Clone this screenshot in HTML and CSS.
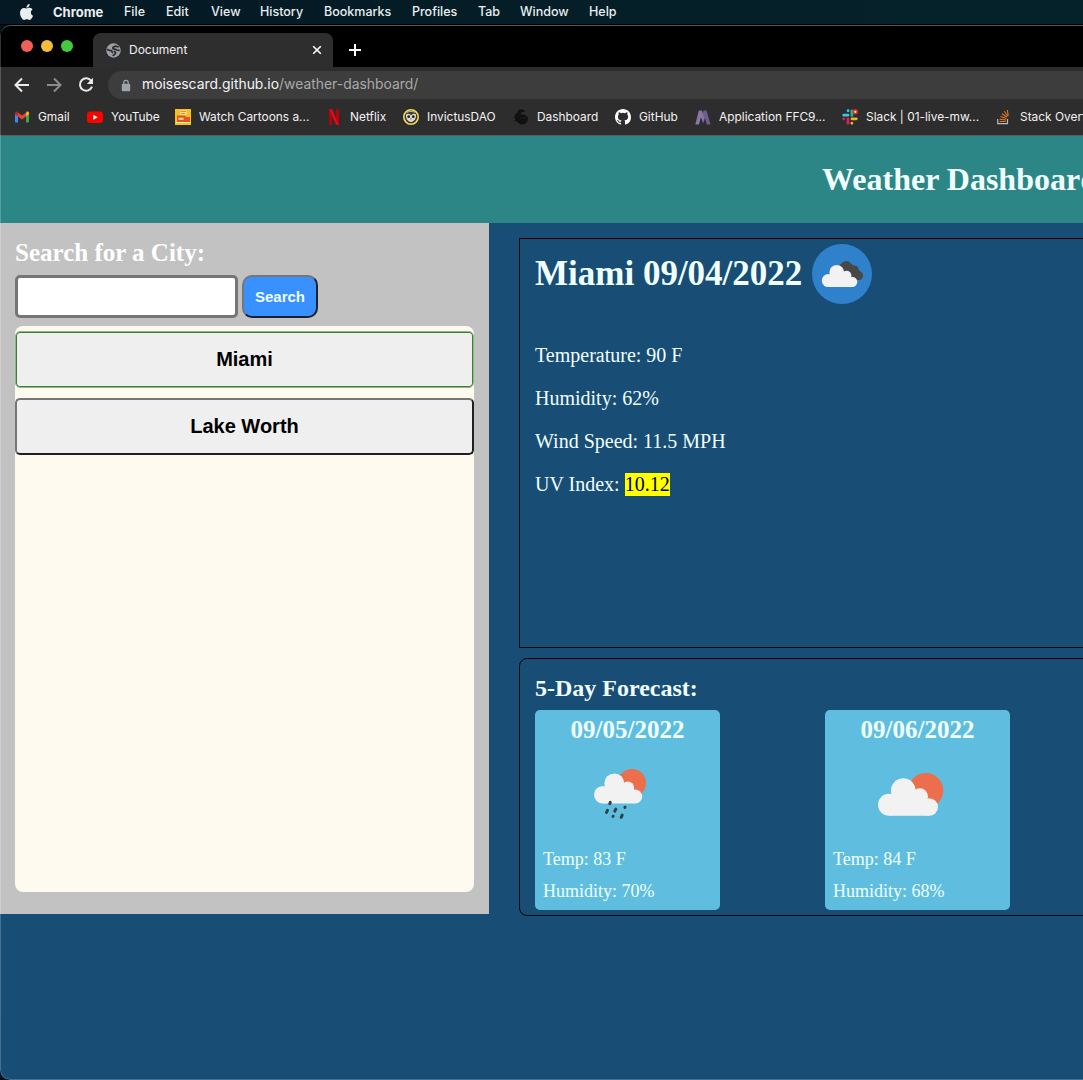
FILE: index.html
```html
<!DOCTYPE html>
<html lang="en">
<head>
<meta charset="utf-8">
<title>Document</title>
<link rel="stylesheet" href="styles.css">
</head>
<body>
<svg width="0" height="0" class="defs"><defs>
  <g id="cloud"><circle cx="11" cy="26.800" r="11"/><circle cx="25.300" cy="12.700" r="12.400"/><circle cx="42" cy="18.300" r="8"/><circle cx="51.200" cy="29" r="8.800"/><path d="M11 37.800V20l14-8 17 6 9.200 10v9.800z"/></g>
</defs></svg>
<nav class="menubar">
  <svg class="apple" viewBox="0 0 814 1000"><path d="M788 341c-6 4-108 62-108 191 0 149 130 201 134 203-1 3-21 72-69 142-43 61-87 123-155 123s-86-40-164-40c-77 0-104 41-166 41s-106-57-156-127C46 791 0 663 0 541c0-194 126-297 251-297 66 0 121 43 163 43 39 0 101-46 176-46 29 0 131 3 198 100zM554 160c31-37 53-88 53-139 0-7-1-14-2-20-50 2-110 34-147 76-28 32-55 83-55 135 0 8 1 16 2 18 3 1 8 1 13 1 45 0 103-30 136-71z"/></svg>
  <span class="app">Chrome</span><span>File</span><span>Edit</span><span>View</span><span>History</span><span>Bookmarks</span><span>Profiles</span><span>Tab</span><span>Window</span><span>Help</span>
</nav>
<div class="window">
  <div class="tabstrip">
    <div class="lights"><i class="red"></i><i class="amber"></i><i class="green"></i></div>
    <div class="tab">
      <svg class="globe" viewBox="0 0 16 16"><circle cx="8" cy="8" r="7.700" fill="#9aa0a6"/><path d="M1.200 6.500C2.500 8.200 4 7.700 5.500 8.200c1.200.5.6 1.900 2 2.400M7.500 14c.2-1.500 2.200-1.500 2.600-3.100.4-1.400-.6-1.700-1.900-1.900M13.500 4c-1.500.3-2.300-.8-4-.5-1.400.3-2.700 1.300-2.100 2.400.5 1 2.200.4 3.300 1 1 .6 1.800 1.300 3.800.7" fill="none" stroke="#2e2e2e" stroke-width="1.900"/></svg>
      <span class="tab-title">Document</span>
      <svg class="close" viewBox="0 0 10 10"><path d="M1.200 1.200l7.600 7.600M8.800 1.200L1.200 8.800"/></svg>
    </div>
    <svg class="plus" viewBox="0 0 12 12"><path d="M6 0v12M0 6h12"/></svg>
  </div>
  <div class="toolbar">
    <svg class="nav-icon" viewBox="0 0 16 16"><path d="M15 8H2M8 1.500L1.500 8 8 14.500"/></svg>
    <svg class="nav-icon dim" viewBox="0 0 16 16"><path d="M1 8h13M8 1.500L14.500 8 8 14.500"/></svg>
    <svg class="nav-icon" viewBox="0 0 16 16"><path d="M13.300 4A6.200 6.200 0 1 0 14 9.700"/><path d="M15 .8v6.200H8.800z" fill="#e8eaed" stroke="none"/></svg>
    <div class="address">
      <svg class="lock" viewBox="0 0 10 12"><rect x=".8" y="4.200" width="8.400" height="7.500" rx="1" fill="#a0a4a9"/><path d="M2.800 5V3a2.200 2.200 0 0 1 4.400 0v2" fill="none" stroke="#a0a4a9" stroke-width="1.200"/></svg>
      <span class="url">moisescard.github.io<em>/weather-dashboard/</em></span>
    </div>
  </div>
  <div class="bookmarks">
    <a><svg viewBox="0 0 16 16"><path d="M1 4.500v8.200c0 .5.4.8.800.8H4V7z" fill="#4285f4"/><path d="M15 4.500v8.200c0 .5-.4.800-.8.800H12V7z" fill="#34a853"/><path d="M12 4.200V7.500l3-2.200V4c0-1.500-1.600-2-2.500-1.300z" fill="#fbbc04"/><path d="M4 4v3.500L1 5.300V4c0-1.500 1.600-2 2.500-1.300z" fill="#c5221f"/><path d="M3.800 3.400L8 6.600l4.200-3.200V7.300L8 10.500 3.800 7.300z" fill="#ea4335"/></svg>Gmail</a>
    <a><svg viewBox="0 0 16 16"><rect y="2.500" width="16" height="11.500" rx="3" fill="#f00"/><path d="M6.300 5.700v5L10.700 8.200z" fill="#fff"/></svg>YouTube</a>
    <a><svg viewBox="0 0 16 16"><rect width="16" height="16" fill="#f3c21d"/><path d="M5 1.500h6.500v4.200H5z" fill="#f7dfb0"/><path d="M5.500 2.500h5.500M6 4.500h4" stroke="#e88d3c"/><path d="M2 6.500h8l1 1.500h4v5H2z" fill="#e8541c"/><path d="M3.500 8.700h5v2h-5z" fill="#f8d9a5"/><path d="M1 13.500h14" stroke="#fff0b0"/></svg>Watch Cartoons a...</a>
    <a><svg viewBox="0 0 16 16"><path d="M3.200.2h3v15.500l-3 .3zM10 .2h3V16l-3-.3z" fill="#b1060f"/><path d="M3.200.2h3L13 16l-3-.3z" fill="#e50914"/></svg>Netflix</a>
    <a><svg viewBox="0 0 16 16"><circle cx="8" cy="8" r="7.200" fill="#3d3a33" stroke="#f2d94e" stroke-width="1.600"/><path d="M3 5.500C5 4 7 5 8 6.500 9 5 11 4 13 5.500c.5 4-2 7.200-5 7.500-3-.3-5.500-3.500-5-7.500z" fill="#dedcd4"/><circle cx="5.700" cy="7.700" r="1.400" fill="#24221f"/><circle cx="10.300" cy="7.700" r="1.400" fill="#24221f"/><path d="M7.200 9.200h1.600L8 11z" fill="#57534b"/><path d="M4 3.500C6 2 10 2 12 3.500" fill="none" stroke="#d8d6cf" stroke-width=".8"/></svg>InvictusDAO</a>
    <a><svg viewBox="0 0 16 16"><path d="M5.500 1C8 0 12 .8 12.500 2.500L9 3c-1 .8-1.300 2-.3 3l2-.8L14 7l1 3c-.2 3-2.800 5.500-6 5.500-2.500 0-4-1.500-4.500-2.700L1.500 12l1-2-2-2 1.800-.8L1.500 5l2-.2z" fill="#111"/><path d="M7 8.500c2 1.500 4.500 1 6.500-.5" fill="none" stroke="#262626" stroke-width=".7"/></svg>Dashboard</a>
    <a><svg viewBox="0 0 16 16"><path fill="#fff" d="M8 0C3.580 0 0 3.580 0 8c0 3.540 2.290 6.530 5.470 7.590.4.070.55-.17.55-.38 0-.19-.01-.82-.01-1.490-2.010.37-2.530-.49-2.690-.94-.09-.23-.48-.94-.82-1.130-.28-.15-.68-.52-.01-.53.63-.01 1.080.58 1.230.82.72 1.210 1.870.87 2.330.66.070-.52.28-.87.510-1.070-1.780-.2-3.640-.89-3.640-3.950 0-.87.310-1.590.82-2.150-.08-.2-.36-1.020.08-2.120 0 0 .67-.21 2.200.82a7.600 7.600 0 0 1 4 0c1.530-1.040 2.200-.82 2.200-.82.44 1.100.16 1.920.08 2.120.51.56.82 1.270.82 2.150 0 3.070-1.870 3.750-3.650 3.950.29.25.54.73.54 1.480 0 1.070-.01 1.930-.01 2.200 0 .21.150.46.55.38A8.010 8.010 0 0 0 16 8c0-4.420-3.580-8-8-8z"/></svg>GitHub</a>
    <a><svg viewBox="0 0 16 16"><path d="M8.500 1.500h3L15.500 15.500h-3.700L10 9l-1.800 5.500L6.500 9z" fill="#6f5c91"/><path d="M3.800 1.500h3L9.300 9 8 13.500 6 8 4 15.500H.3z" fill="#8877a0"/></svg>Application FFC9...</a>
    <a><svg viewBox="0 0 16 16" fill="none" stroke-width="2.800" stroke-linecap="round"><path d="M1.700 6.200H6M6.100 1.700v.1" stroke="#36c5f0"/><path d="M9.900 1.800v4.500" stroke="#2eb67d"/><path d="M10 9.800h4.300M9.900 14.300v-.1" stroke="#ecb22e"/><path d="M6 10v4.200M1.700 9.800h.1" stroke="#e01e5a"/><circle cx="13.300" cy="2.800" r="1.900" fill="#fff" stroke="#e02a2a" stroke-width="1.600"/></svg>Slack | 01-live-mw...</a>
    <a><svg viewBox="0 0 16 16" fill="none"><path d="M1.700 10v4.700h9.800V10" stroke="#bcbbbb" stroke-width="1.200"/><path d="M3.500 12.500h6.200M3.700 10.200l6.200.8M4.500 7.500l5.800 2M6 4.800l5 3.500M8.300 2.300l3.400 5M11.400 1l.8 5.800" stroke="#e07a22" stroke-width="1.100"/></svg>Stack Overflow</a>
  </div>
  <div class="viewport">
    <div class="page">
      <header><h1>Weather Dashboard</h1></header>
      <div class="columns">
        <aside>
          <h2>Search for a City:</h2>
          <form class="search"><input type="text" aria-label="City"><button type="button">Search</button></form>
          <div class="history"><button class="city active" type="button">Miami</button><button class="city" type="button">Lake Worth</button></div>
        </aside>
        <main>
          <section class="current">
            <div class="heading"><h2>Miami 09/04/2022</h2>
              <svg class="today" viewBox="0 0 60 60"><circle cx="30" cy="30" r="30" fill="#3081cb"/><path d="M26 36V22l8-5 5 3 5 2.500 4 5V36z" fill="#484848"/><g fill="#484848"><circle cx="34.300" cy="22.700" r="5.700"/><circle cx="42.800" cy="25.500" r="3.700"/><circle cx="46.600" cy="31.600" r="4.500"/></g><use href="#cloud" transform="translate(9.800 20.700) scale(.592)" fill="#f2f2f2"/></svg>
            </div>
            <p>Temperature: 90 F</p><p>Humidity: 62%</p><p>Wind Speed: 11.5 MPH</p><p>UV Index: <span class="uv">10.12</span></p>
          </section>
          <section class="forecast">
            <h3>5-Day Forecast:</h3>
            <div class="days">
              <article><h4>09/05/2022</h4>
                <svg class="sky" viewBox="0 0 100 100"><circle cx="74" cy="40" r="14" fill="#ec6e4c"/><use href="#cloud" transform="translate(36 30.200) scale(.803)" fill="#f2f2f2"/><path d="M51.800 60.600l.5-1.200M48.500 69.500l1-2.200M56.800 68.200l1-2.200M55 73.400l.1-.2M66.900 64.400l.1-.2M63.200 74.300l1-2.200" stroke="#333f43" stroke-width="3" stroke-linecap="round"/></svg>
                <p>Temp: 83 F</p><p>Humidity: 70%</p></article>
              <article><h4>09/06/2022</h4>
                <svg class="sky" viewBox="0 0 100 100"><circle cx="77.800" cy="47.500" r="17.500" fill="#ec6e4c"/><use href="#cloud" transform="translate(30 35)" fill="#f2f2f2"/></svg>
                <p>Temp: 84 F</p><p>Humidity: 68%</p></article>
            </div>
          </section>
        </main>
      </div>
    </div>
  </div>
</div>
</body>
</html>
```
FILE: styles.css
```css
* { box-sizing: border-box; }
body { margin: 0; width: 1083px; height: 1080px; overflow: hidden; background: #03121a; font-family: Inter, sans-serif; }
svg { display: block; flex: none; }
h1, h2, h3, h4, p { margin: 0; }

.menubar { height: 25px; padding-left: 20px; display: grid; align-items: center; grid-template-columns: 33px 71px 42px 45px 49px 64px 88px 66px 42px 69px 60px; background: linear-gradient(90deg, #041923, #05222b); border-bottom: 1px solid #000; color: #e9eef0; font-size: 12.5px; font-weight: 500; line-height: 24px; white-space: nowrap; }
.menubar .app { font-weight: 700; font-size: 13px; }
.apple { width: 13px; height: 16px; fill: #e9eef0; }

.window { position: relative; height: 1055px; padding-top: 1px; display: flex; flex-direction: column; overflow: hidden; background: #000; border-radius: 10px 0 0 10px; }
.window::after { content: ""; position: absolute; inset: 0; border: 1px solid rgba(255, 255, 255, .2); border-top-color: rgba(255, 255, 255, .33); border-right: 0; border-radius: 10px 0 0 10px; pointer-events: none; }
.tabstrip { height: 41px; flex: none; display: flex; background: #000; }
.lights { width: 93px; padding: 14px 0 0 21px; display: flex; gap: 8px; }
.lights i { width: 12px; height: 12px; border-radius: 50%; }
.red { background: #ee6156; }
.amber { background: #f4bc39; }
.green { background: #45c940; }
.tab { width: 240px; height: 34px; margin-top: 7px; padding: 0 11px 0 13px; display: flex; align-items: center; background: #2e2e2e; border-radius: 8px 8px 0 0; color: #f1f1f1; font-size: 12px; }
.globe { width: 15px; height: 15px; }
.tab-title { margin-left: 8px; padding-bottom: 2px; flex: 1; }
.close { width: 10px; height: 10px; stroke: #fff; stroke-width: 1.6; }
.plus { width: 12px; height: 12px; margin: 18px 0 0 16px; stroke: #fff; stroke-width: 2; }

.toolbar { height: 36px; flex: none; padding-left: 14px; display: flex; align-items: center; gap: 16px; background: #2d2d2d; }
.nav-icon { width: 16px; height: 16px; fill: none; stroke: #e8eaed; stroke-width: 2; }
.dim { opacity: .5; }
.address { flex: 1; height: 28px; margin-left: -2px; padding-left: 13px; display: flex; align-items: center; gap: 11px; background: #3d3d3d; border-radius: 14px 0 0 14px; color: #f4f4f4; font-size: 13.9px; }
.lock { width: 10px; height: 13px; }
.url { padding-bottom: 2px; }
.url em { font-style: normal; color: #a9a9a9; }

.bookmarks { height: 33px; flex: none; padding: 0 0 5px 14px; display: grid; align-items: center; grid-template-columns: 73px 88px 151px 77px 110px 102px 80px 147px 154px 150px; background: #2d2d2d; border-bottom: 1px solid #52605f; color: #f2f2f2; font-size: 11.9px; }
.bookmarks a { display: flex; align-items: center; gap: 8px; white-space: nowrap; }
.bookmarks svg { width: 16px; height: 16px; }

.viewport { flex: 1; overflow: hidden; background: #184d75; font-family: "Liberation Serif", serif; color: azure; }
.page { width: 1920px; }
header { height: 87px; display: flex; align-items: center; justify-content: center; background: #2d8686; }
h1 { font-size: 32px; line-height: 37px; }
.columns { display: flex; align-items: flex-start; }
aside { flex: none; width: 489px; height: 691px; padding: 15px; background: #c2c2c2; }
aside h2 { font-size: 25px; line-height: 29px; color: #fff; }
.search { display: flex; gap: 4px; margin-top: 8px; }
.search input { width: 223px; height: 43px; border: 3px solid #767676; border-radius: 5px; background: #fff; }
.search button { width: 76px; height: 43px; padding: 0; border: 2px solid; border-color: #767676 #17222c #17222c #767676; border-radius: 10px; background: #3891ff; color: azure; font: bold 15px "Liberation Sans", sans-serif; }
.history { height: 566px; margin-top: 8px; padding-top: 5px; display: flex; flex-direction: column; gap: 10px; background: #fffaf0; border-radius: 8px; }
.city { height: 57px; padding: 0; border: 2px solid; border-color: #767676 #202020 #202020 #767676; border-radius: 5px; background: #efefef; color: #000; font: bold 20px "Liberation Sans", sans-serif; }
.city.active { border: 1px solid #8db889; box-shadow: inset 0 0 0 1px #427c3c; }

main { flex: 1; min-width: 0; padding: 15px 24px 0 30px; }
.current { height: 410px; padding: 5px 15px; border: 1px solid #000; font-size: 20px; }
.heading { height: 60px; margin-bottom: 40px; display: flex; align-items: center; gap: 10px; }
.heading h2 { font-size: 35px; line-height: 40px; }
.today { width: 60px; height: 60px; }
.current p { height: 23px; margin-bottom: 20px; line-height: 23px; }
.uv { display: inline-block; background: #ff0; color: #000; }
.forecast { height: 258px; margin-top: 10px; padding: 15px 15px 0; border: 1px solid #000; border-radius: 8px; }
h3 { height: 36px; font-size: 24px; line-height: 29px; }
.days { display: grid; grid-template-columns: repeat(5, 290px); }
article { width: 185px; height: 200px; padding: 5px 8px; background: #5fbedf; border-radius: 5px; font-size: 18px; }
h4 { font-size: 25px; line-height: 29px; text-align: center; }
.sky { width: 100px; height: 100px; margin: -1px 0 6px 15px; }
article p { height: 21px; margin-bottom: 11px; line-height: 21px; }
```
